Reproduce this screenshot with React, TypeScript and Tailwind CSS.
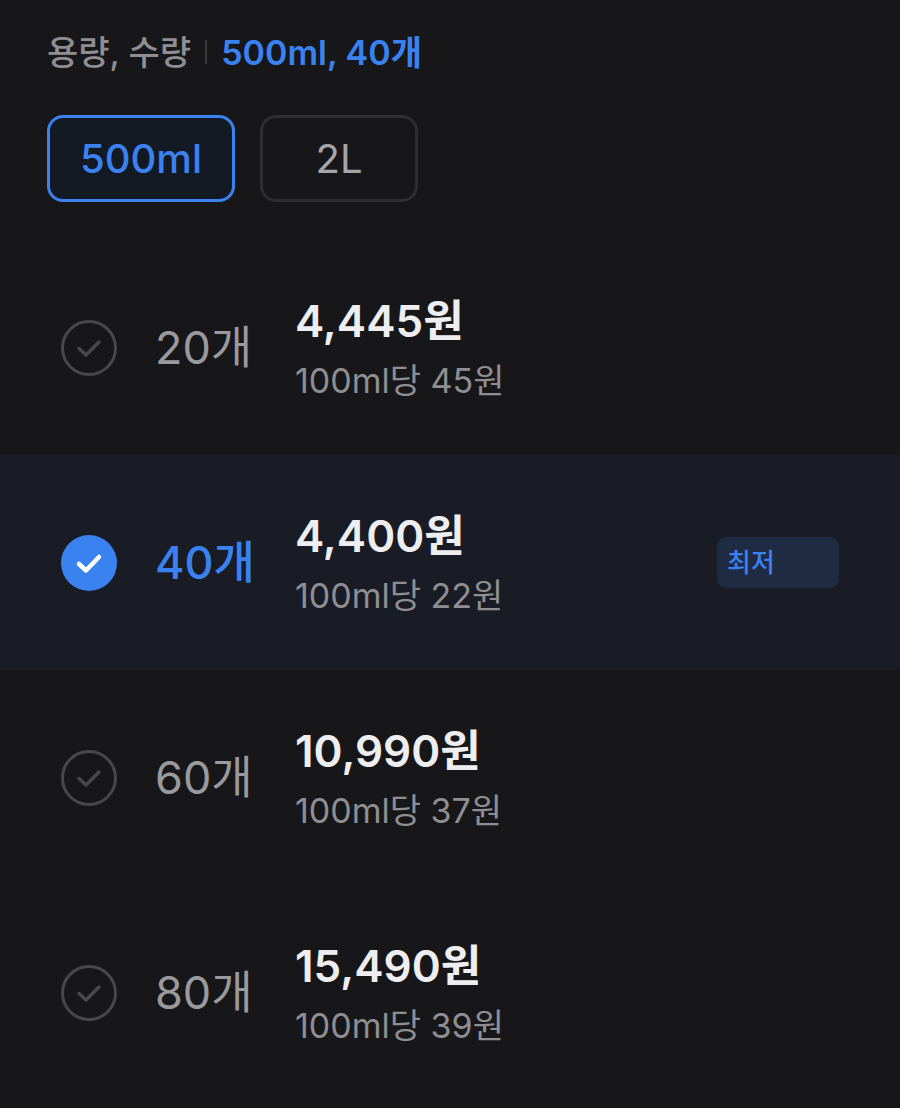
import React from "react";

const font = {
  fontFamily: 'Inter, "Noto Sans CJK KR", "Noto Sans", sans-serif',
};

const options = [
  { count: "20개", price: "4,445원", unit: "100ml당 45원", selected: false },
  { count: "40개", price: "4,400원", unit: "100ml당 22원", selected: true, badge: "최저" },
  { count: "60개", price: "10,990원", unit: "100ml당 37원", selected: false },
  { count: "80개", price: "15,490원", unit: "100ml당 39원", selected: false },
];

function CheckIcon({ on }: { on: boolean }) {
  if (on) {
    return (
      <svg width="58" height="58" viewBox="0 0 58 58">
        <circle cx="29" cy="29" r="28" fill="#3a82f0" />
        <path
          d="M19 30 L26 36.5 L39 23"
          fill="none"
          stroke="#ffffff"
          strokeWidth="4.5"
          strokeLinecap="round"
          strokeLinejoin="round"
        />
      </svg>
    );
  }
  return (
    <svg width="58" height="58" viewBox="0 0 58 58">
      <circle cx="29" cy="29" r="26.5" fill="none" stroke="#48484b" strokeWidth="3" />
      <path
        d="M19 29.5 L26 36 L39 23"
        fill="none"
        stroke="#48484b"
        strokeWidth="3.5"
        strokeLinecap="round"
        strokeLinejoin="round"
      />
    </svg>
  );
}

export default function App() {
  return (
    <div className="w-[900px] h-[1108px] bg-[#17171a] overflow-hidden" style={font}>
      {/* header */}
      <div className="flex items-center pl-[47px] pt-[28px] h-[76px] text-[34px]">
        <span className="text-[#8e8e93] font-medium">용량, 수량</span>
        <span className="mx-[14px] w-[2px] h-[24px] bg-[#3a3a3d]" />
        <span className="text-[#3a82f0] font-semibold">500ml, 40개</span>
      </div>

      {/* size chips */}
      <div className="flex gap-[25px] pl-[47px] mt-[39px]">
        <div className="w-[188px] h-[87px] rounded-[16px] border-[3px] border-[#3a82f0] bg-[#141a24] flex items-center justify-center text-[40px] font-medium text-[#3a82f0]">
          500ml
        </div>
        <div className="w-[158px] h-[87px] rounded-[16px] border-[3px] border-[#2e2e31] flex items-center justify-center text-[40px] text-[#a5a5aa]">
          2L
        </div>
      </div>

      {/* options */}
      <div className="mt-[38px] flex flex-col">
        {options.map((o) => (
          <div
            key={o.count}
            className={
              "h-[215px] flex items-center pl-[60px] pr-[61px] " +
              (o.selected ? "bg-[#191c24]" : "")
            }
          >
            <CheckIcon on={o.selected} />
            <span
              className={
                "ml-[37px] w-[140px] text-[45px] " +
                (o.selected ? "text-[#3a82f0] font-medium" : "text-[#9a9a9e]")
              }
            >
              {o.count}
            </span>
            <div className="flex flex-col">
              <span className="text-[44px] leading-[54px] font-semibold text-[#eeeef0]">
                {o.price}
              </span>
              <span className="mt-[12px] text-[34px] leading-[42px] text-[#8e8e93]">
                {o.unit}
              </span>
            </div>
            {o.badge && (
              <div className="ml-auto w-[122px] h-[51px] rounded-[9px] bg-[#1e2b42] flex items-center pl-[10px] text-[26px] font-medium text-[#3a82f0]">
                {o.badge}
              </div>
            )}
          </div>
        ))}
      </div>
    </div>
  );
}
